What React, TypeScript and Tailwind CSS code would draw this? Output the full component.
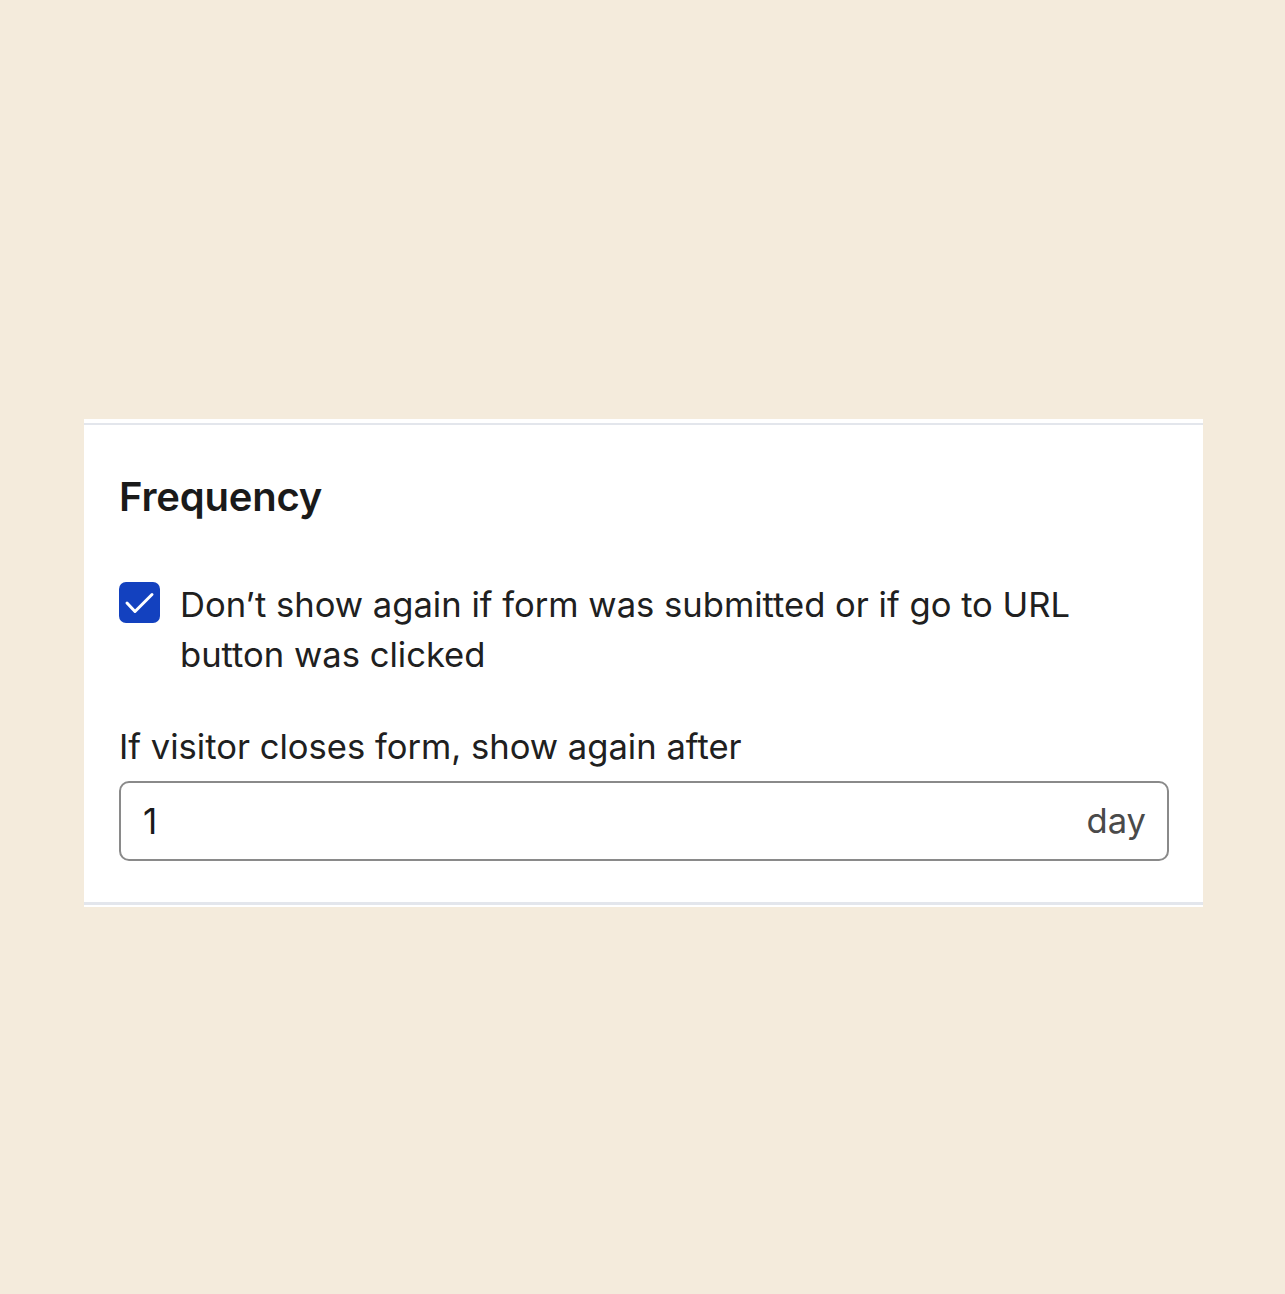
export default function App() {
  return (
    <div
      className="min-h-[1294px] w-full bg-[#f4ebdc] pt-[419px]"
      style={{ fontFamily: "Inter, 'Noto Sans', sans-serif" }}
    >
      <div className="ml-[84px] w-[1119px] bg-white pt-[4px] pb-[2px]">
        <div className="border-t-[2px] border-b-[3px] border-[#e3e6ec] pl-[35px] pr-[34px] pt-[48px] pb-[41px]">
          <h2 className="text-[40px] font-semibold leading-[48px] text-[#1a1a1a] tracking-[-0.2px]">
            Frequency
          </h2>
          <label className="mt-[58px] flex items-start gap-[20px] text-[#202020]">
            <span className="mt-[3px] flex h-[41px] w-[41px] shrink-0 items-center justify-center rounded-[7px] bg-[#1341bf]">
              <svg width="41" height="41" viewBox="0 0 41 41" fill="none">
                <path
                  d="M8 21l8 8.5 17-17"
                  stroke="white"
                  strokeWidth="3"
                  strokeLinecap="round"
                  strokeLinejoin="round"
                />
              </svg>
            </span>
            <span className="text-[34.6px] leading-[50px]">
              Don’t show again if form was submitted or if go to URL
              <br />
              button was clicked
            </span>
          </label>
          <div className="mt-[42px] text-[34.6px] leading-[50px] text-[#202020]">
            If visitor closes form, show again after
          </div>
          <div className="mt-[10px] flex h-[80px] items-center justify-between rounded-[10px] border-[2.5px] border-[#8a8a8a] pl-[22px] pr-[21px]">
            <span className="text-[35px] text-[#1a1a1a]">1</span>
            <span className="text-[34.6px] text-[#4a4a4a]">day</span>
          </div>
        </div>
      </div>
    </div>
  );
}
